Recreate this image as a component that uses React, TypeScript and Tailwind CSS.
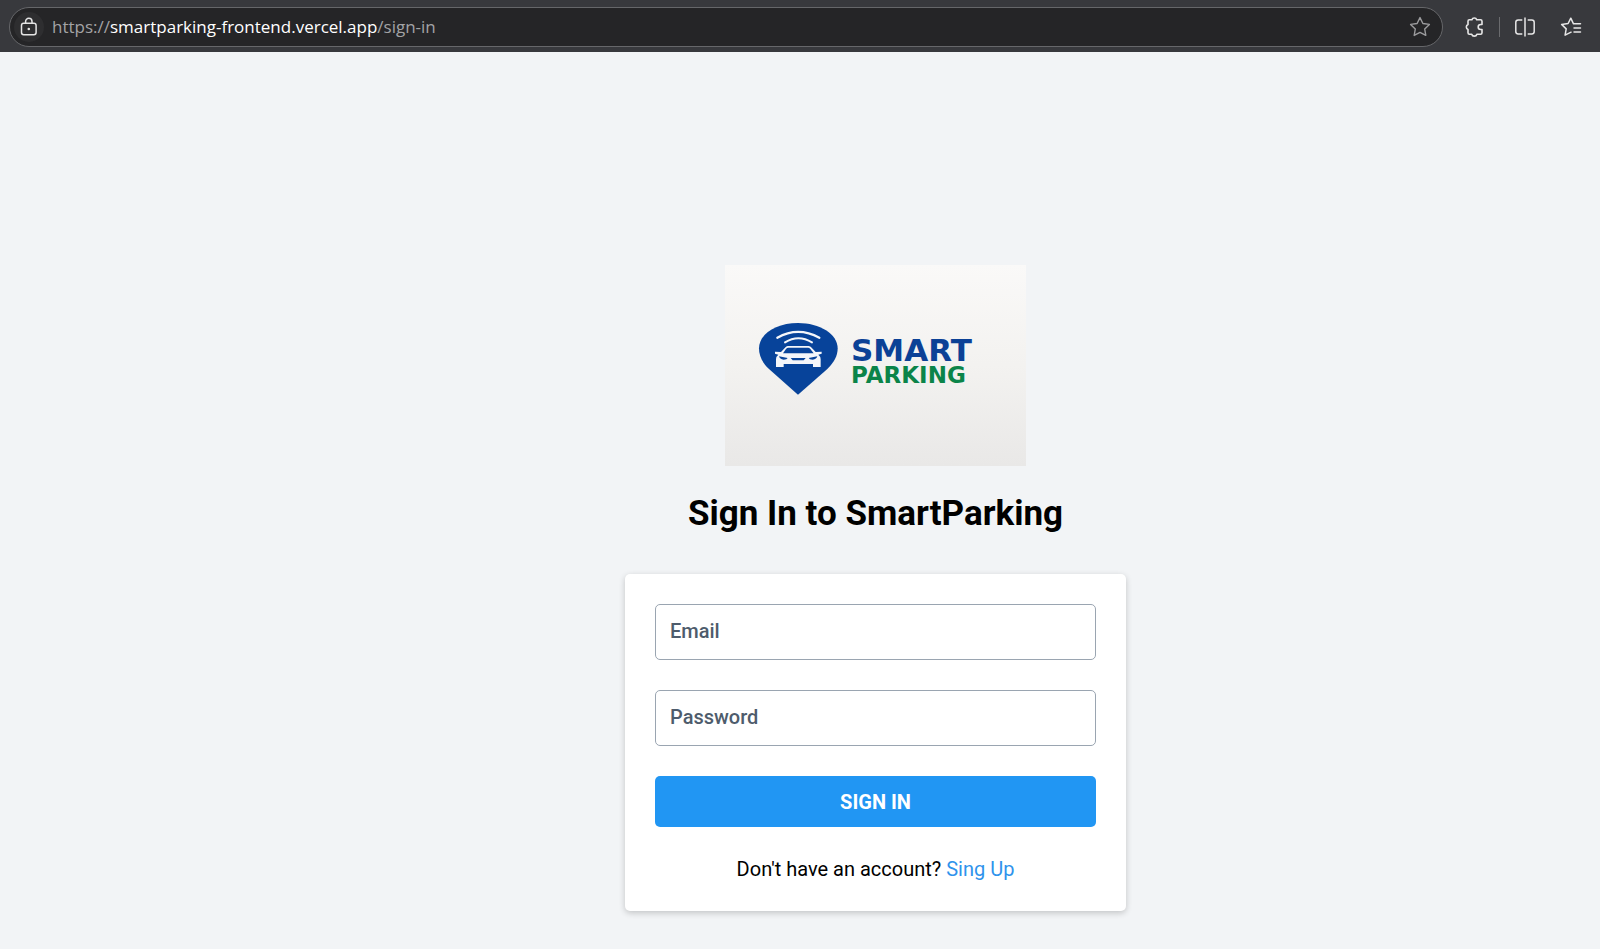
import React from "react";

function LockIcon() {
  return (
    <svg viewBox="0 0 18 20" className="h-5 w-[18px]" fill="none" stroke="#e4e4e4" strokeWidth="1.5">
      <rect x="1.5" y="6.2" width="14.6" height="11.6" rx="2.2" />
      <path d="M5.6 6V4.5a3.2 3.2 0 0 1 6.4 0V6" />
      <circle cx="8.8" cy="12" r="1.3" fill="#e4e4e4" stroke="none" />
    </svg>
  );
}

function StarIcon() {
  return (
    <svg viewBox="0 0 22 22" className="size-[22px]" fill="none" stroke="#9b9b9d" strokeWidth="1.4" strokeLinejoin="round">
      <path d="M11 1.600l2.900 5.900 6.500.9-4.700 4.600 1.100 6.400L11 16.400 5.200 19.400l1.100-6.400L1.600 8.400l6.500-.9z" />
    </svg>
  );
}

function PuzzleIcon() {
  return (
    <svg viewBox="0 0 22 22" className="size-[22px]" fill="none" stroke="#e6e6e6" strokeWidth="1.6" strokeLinejoin="round">
      <path d="M6.400 3.800H8.900a2.500 2.500 0 0 1 4.800 0h3.900a1.400 1.400 0 0 1 1.400 1.400v3.300h-1.300a2.500 2.500 0 0 0 0 5h1.300v3.300a1.400 1.400 0 0 1-1.400 1.400h-3.700a2.700 2.700 0 0 1-5.200 0H6.400a1.400 1.400 0 0 1-1.400-1.400v-3.300a2.700 2.700 0 0 1 0-5V5.200a1.400 1.400 0 0 1 1.400-1.400z" />
    </svg>
  );
}

function SplitIcon() {
  return (
    <svg viewBox="0 0 22 22" className="size-[22px]" fill="none" stroke="#e6e6e6" strokeWidth="1.5">
      <path d="M8.300 18H4.200a2.400 2.400 0 0 1-2.400-2.400V6.400A2.400 2.400 0 0 1 4.200 4h4.100M13.700 4h4.100a2.400 2.400 0 0 1 2.400 2.400v9.200a2.400 2.400 0 0 1-2.400 2.400h-4.100M11 1.500v19" />
    </svg>
  );
}

function FavoritesIcon() {
  return (
    <svg viewBox="0 0 22 22" className="size-[22px]" fill="none" stroke="#e6e6e6" strokeWidth="1.5" strokeLinejoin="round" strokeLinecap="round">
      <path d="M20.500 7.800h-7L10.800 2.200 8.100 7.500l-6.500.9 4.600 4.500-1.100 6.300 6-3" />
      <path d="M14 12H20.500M14 16h6.500" />
    </svg>
  );
}

function PinMark() {
  return (
    <svg viewBox="129 204 240 216" className="h-[72px] w-20" fill="none">
      <path
        d="M249 419L162 342C142 323 132 303 132 280C132 237 184 204 249 204S368 237 368 280C368 303 357 323 337 342Z"
        fill="#07439a"
      />
      <g stroke="#f4f6fa" strokeLinecap="round">
        <path d="M187 248Q249 213 313 248" strokeWidth="7" />
        <path d="M210 262Q250 237 291 262" strokeWidth="6" />
      </g>
      <path
        fill="#f4f6fa"
        fillRule="evenodd"
        d="M218 273H281Q286 273 290 278L302 291L320 290V296L310 299Q317 304 317 313V336H294V327H206V336H183V313Q183 304 190 299L180 296V290L198 291L210 278Q214 273 218 273ZM220 278Q216 278 213 282L204 295H296L286 282Q283 278 279 278Z"
      />
      <path fill="#07439a" d="M192 304L218 309Q216 314 206 314Q194 313 192 304ZM307 304L281 309Q283 314 293 314Q305 313 307 304ZM227 309H272L266 316H233Z" />
    </svg>
  );
}

function BrowserBar() {
  return (
    <header className="flex h-[52px] items-center bg-[#38393d] pt-px pr-[18px] pl-[9px] text-[#a3a3a5]">
      <div className="flex h-10 min-w-0 flex-1 items-center rounded-full border border-[#66676a] bg-[#252527] pr-[11px] pl-1">
        <button type="button" aria-label="Site information" className="flex size-[30px] items-center justify-center rounded-full bg-[#2e2e30]">
          <LockIcon />
        </button>
        <p className="min-w-0 flex-1 truncate pl-2 font-['Open_Sans','Noto_Sans',sans-serif] text-[17px]">
          https://<span className="text-white">smartparking-frontend.vercel.app</span>/sign-in
        </p>
        <button type="button" aria-label="Add to favorites">
          <StarIcon />
        </button>
      </div>
      <div className="flex items-center pl-5">
        <button type="button" aria-label="Extensions">
          <PuzzleIcon />
        </button>
        <span className="mx-[14px] h-5 w-px bg-[#6a6b6e]" />
        <button type="button" aria-label="Split screen">
          <SplitIcon />
        </button>
        <button type="button" aria-label="Favorites" className="ml-6">
          <FavoritesIcon />
        </button>
      </div>
    </header>
  );
}

function Logo() {
  return (
    <div className="flex h-[201px] w-[301px] items-center gap-[13px] bg-linear-to-b from-[#faf9f8] via-[#f3f2f0] to-[#e9e8e7] pb-[14px] pl-[33px]">
      <PinMark />
      <div className="pt-1 font-['DejaVu_Sans',sans-serif] font-bold">
        <div className="text-[31px] leading-7 text-[#0b4196]">SMART</div>
        <div className="text-[23px] leading-[22px] text-[#0b8449]">PARKING</div>
      </div>
    </div>
  );
}

function Field({ id, label, type }: { id: string; label: string; type: string }) {
  return (
    <div className="relative">
      <input
        id={id}
        type={type}
        placeholder=" "
        className="peer block h-14 w-full rounded-[5px] border border-[#9aa5b1] bg-white px-[14px] text-xl text-black"
      />
      <label
        htmlFor={id}
        className="pointer-events-none absolute inset-y-0 left-[15px] hidden items-center pb-0.5 text-xl font-medium text-[#4e5c6c] peer-placeholder-shown:flex"
      >
        {label}
      </label>
    </div>
  );
}

export default function App() {
  return (
    <div className="flex min-h-screen flex-col bg-[#f2f4f6] font-[Roboto,sans-serif]">
      <BrowserBar />
      <main className="flex flex-1 flex-col items-center justify-end pb-[38px] pl-[151px]">
        <Logo />
        <h1 className="mt-[25px] text-[35px] leading-[45px] font-bold text-black">Sign In to SmartParking</h1>
        <form
          onSubmit={(e: React.FormEvent) => e.preventDefault()}
          className="mt-[38px] flex w-full max-w-[501px] flex-col gap-[30px] rounded-[5px] bg-white p-[30px] shadow-[0_2px_6px_rgba(0,0,0,0.2)]"
        >
          <Field id="email" label="Email" type="email" />
          <Field id="password" label="Password" type="password" />
          <button type="submit" className="h-[51px] rounded-[5px] bg-[#2196f3] text-xl font-bold text-white">
            SIGN IN
          </button>
          <p className="text-center text-xl leading-6 text-black">
            Don't have an account?{" "}
            <a href="/sign-up" className="text-[#2f93ec]">
              Sing Up
            </a>
          </p>
        </form>
      </main>
    </div>
  );
}
